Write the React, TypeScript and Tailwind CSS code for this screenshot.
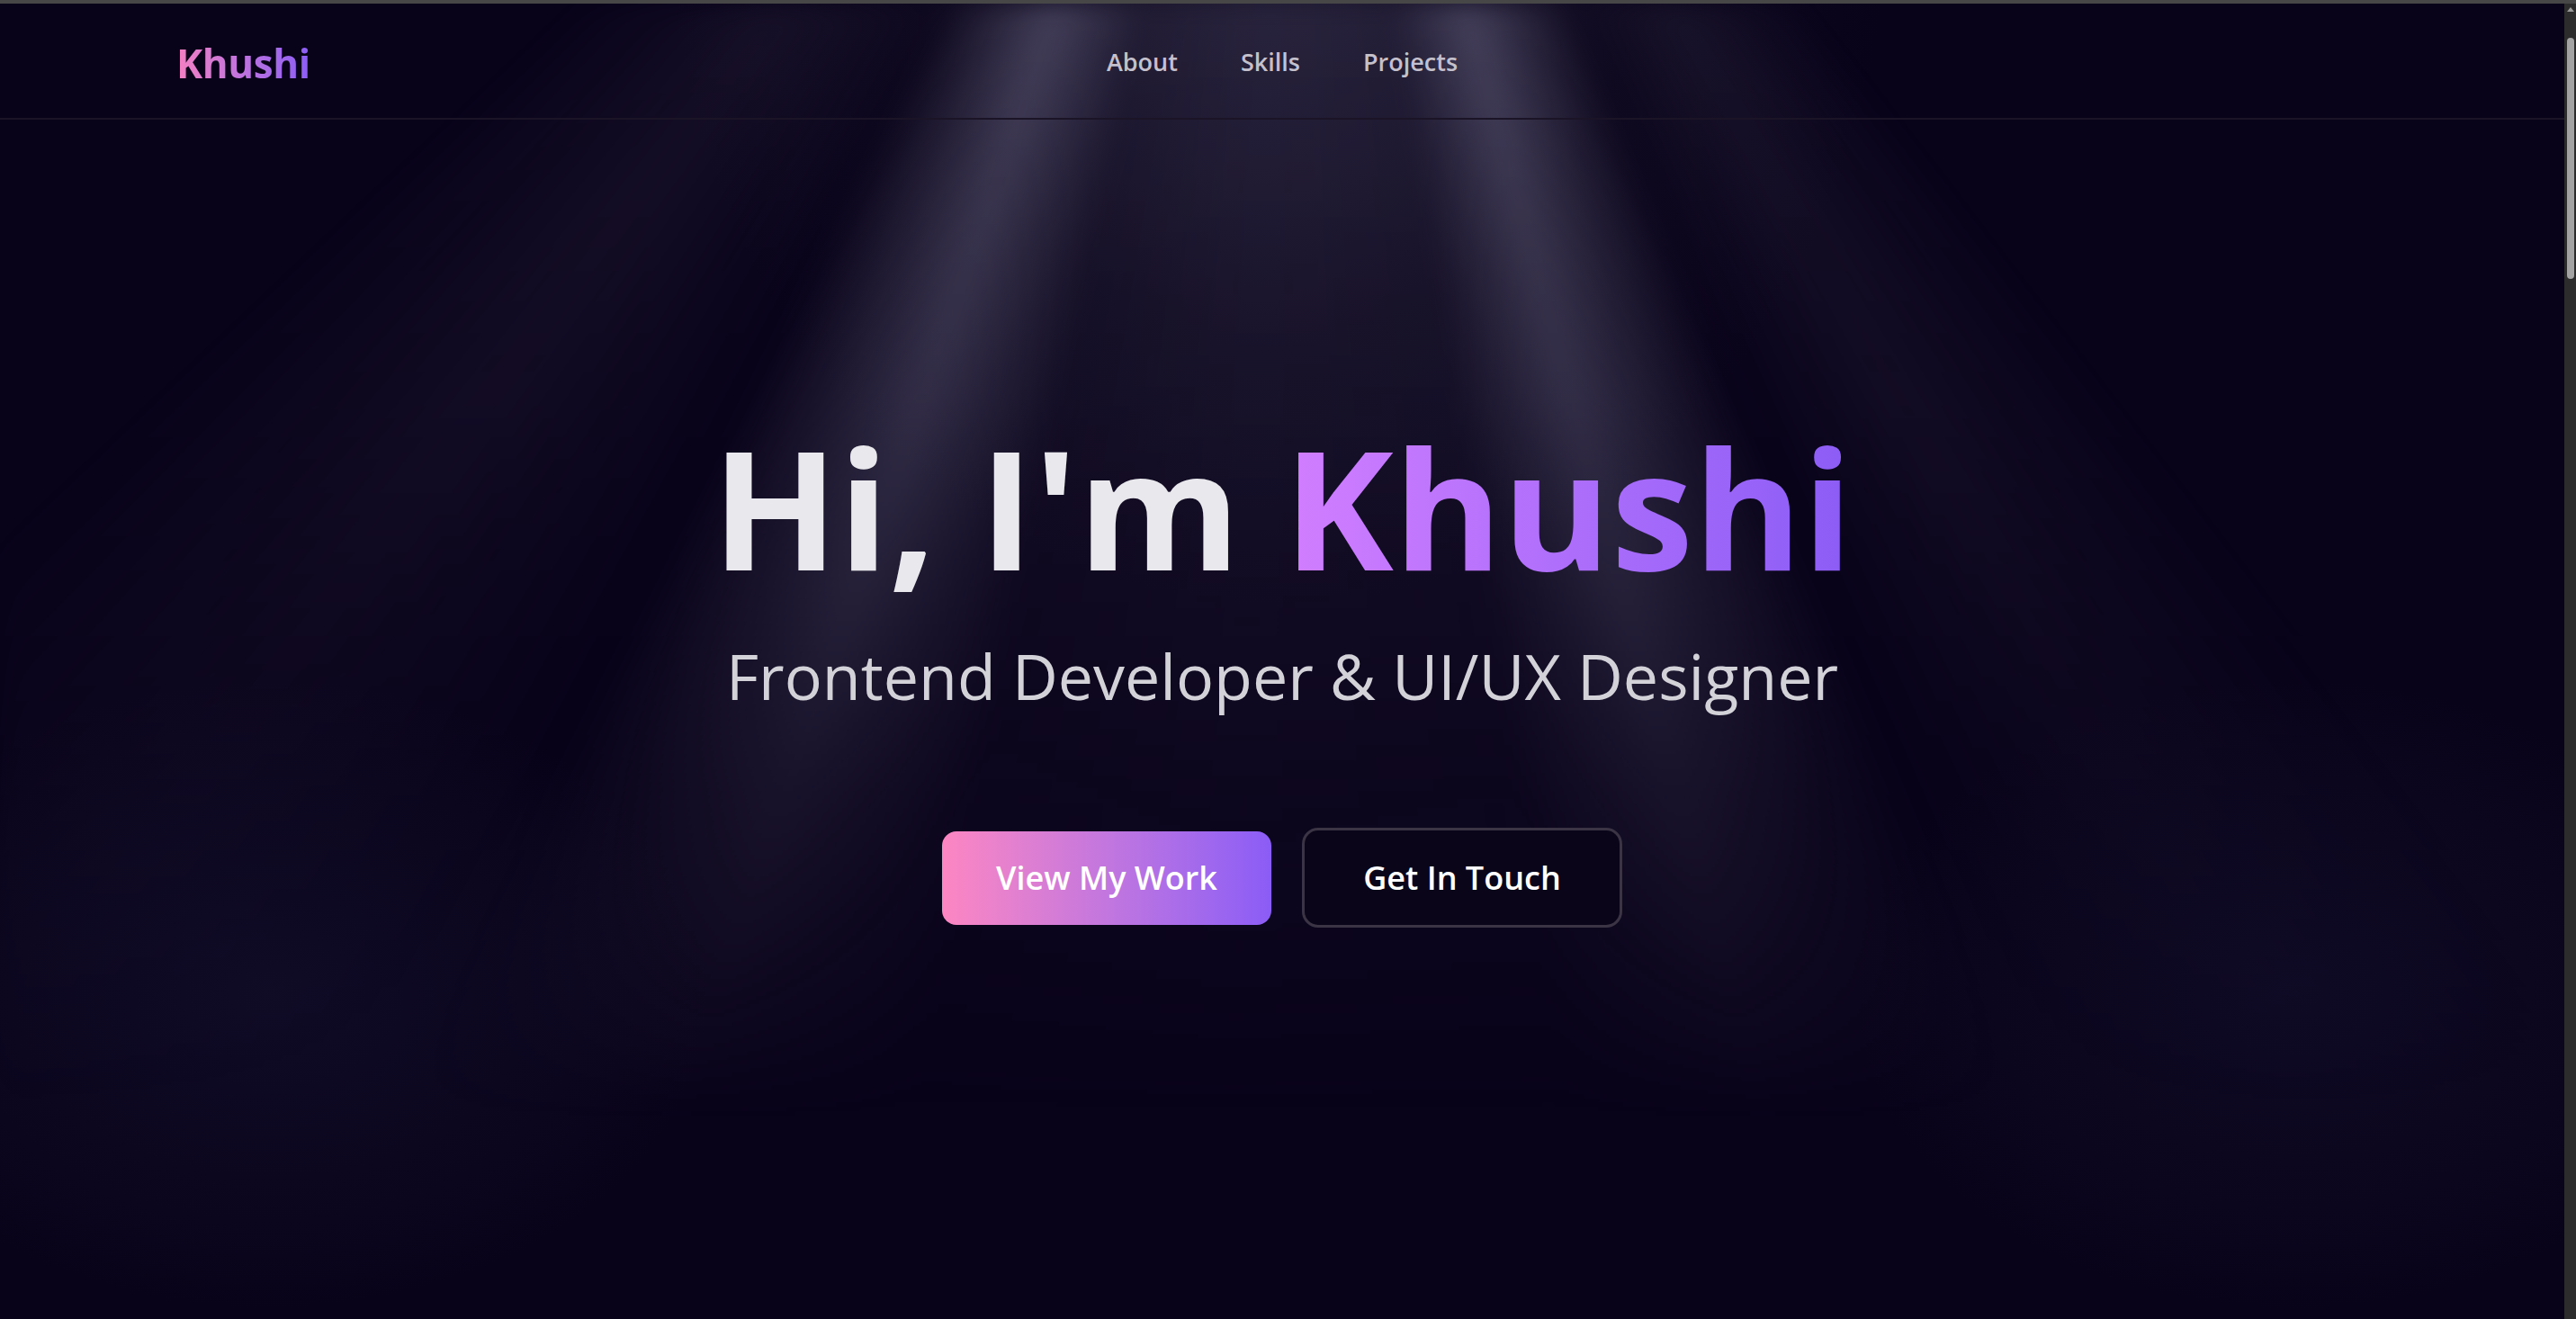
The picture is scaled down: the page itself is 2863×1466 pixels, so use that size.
import React from 'react';

const navLinks = ['About', 'Skills', 'Projects'];

const LightRays = () => (
    <div className="pointer-events-none absolute inset-0 overflow-hidden">
        {/* soft wash from the top centre */}
        <div className="absolute inset-0 bg-[radial-gradient(ellipse_900px_1000px_at_1420px_-80px,rgba(66,62,88,0.42),rgba(30,26,44,0.25)_45%,transparent_75%)]" />
        {/* the beams, fanning out from a point above the page */}
        <div className="absolute inset-0 bg-[conic-gradient(from_90deg_at_1430px_-740px,transparent_0deg,transparent_52deg,rgba(120,116,150,0.10)_60deg,transparent_67deg,rgba(140,136,168,0.40)_75deg,rgba(105,100,135,0.12)_81deg,rgba(105,100,135,0.15)_92deg,rgba(105,100,135,0.10)_102deg,rgba(140,136,168,0.40)_109deg,transparent_117deg,rgba(120,116,150,0.10)_127deg,transparent_137deg,transparent_360deg)] [mask-image:linear-gradient(to_bottom,black_0%,rgba(0,0,0,0.8)_30%,rgba(0,0,0,0.3)_60%,transparent_85%)] blur-[14px]" />
        {/* faint glow low on the sides */}
        <div className="absolute inset-0 bg-[radial-gradient(ellipse_700px_500px_at_300px_1100px,rgba(30,28,60,0.35),transparent_70%),radial-gradient(ellipse_700px_500px_at_2550px_1100px,rgba(30,28,60,0.3),transparent_70%)]" />
    </div>
);

const App = () => {
    return (
        <div className="flex h-[1466px] w-full flex-col overflow-hidden bg-[#09031a] font-['Open_Sans','Noto_Sans',sans-serif]">
            <div className="h-[4px] shrink-0 bg-[#474747]" />
            <div className="flex min-h-0 flex-1">
                <div className="relative flex-1">
                    <LightRays />

                    <nav className="relative grid h-[129px] grid-cols-[1fr_auto_1fr] items-center border-b-2 border-[#1a1426] px-[196px] pt-[4px]">
                        <a className="justify-self-start bg-linear-to-r from-[#f47fc2] to-[#8b5cf6] bg-clip-text text-[44px] font-bold tracking-[-0.01em] text-transparent">
                            Khushi
                        </a>
                        <ul className="flex items-center gap-[70px]">
                            {navLinks.map(link => (
                                <li key={link} className="text-[27px] font-semibold text-[#c4c0cc]">
                                    {link}
                                </li>
                            ))}
                        </ul>
                        <div />
                    </nav>

                    <section className="relative flex flex-col items-center pt-[338px]">
                        <h1 className="text-[184px] font-bold leading-none text-[#e9e8ec]">
                            Hi, I'm{' '}
                            <span className="bg-linear-to-r from-[#d27eff] to-[#8b5cf6] bg-clip-text text-transparent">
                                Khushi
                            </span>
                        </h1>
                        <p className="mt-[61px] text-[70px] font-medium leading-none text-[#d4d2d9]">
                            Frontend Developer &amp; UI/UX Designer
                        </p>
                        <div className="mt-[134px] flex items-center gap-[34px]">
                            <button className="flex h-[104px] w-[366px] items-center justify-center rounded-[16px] bg-linear-to-r from-[#fd86c2] to-[#8b5cf6] text-[36px] font-semibold text-white">
                                View My Work
                            </button>
                            <button className="flex h-[111px] w-[356px] items-center justify-center rounded-[18px] border-[3px] border-[#3b3445] bg-[#0a0518] text-[36px] font-semibold text-white">
                                Get In Touch
                            </button>
                        </div>
                    </section>
                </div>

                {/* window scrollbar */}
                <div className="flex w-[13px] shrink-0 flex-col items-center bg-[#2c2c2c] pt-[4px]">
                    <div className="h-0 w-0 border-x-[4px] border-b-[5px] border-x-transparent border-b-[#9a9a9a]" />
                    <div className="mt-[29px] h-[268px] w-[8px] rounded-[4px] bg-[#a3a3a3]" />
                </div>
            </div>
        </div>
    );
};

export default App;
